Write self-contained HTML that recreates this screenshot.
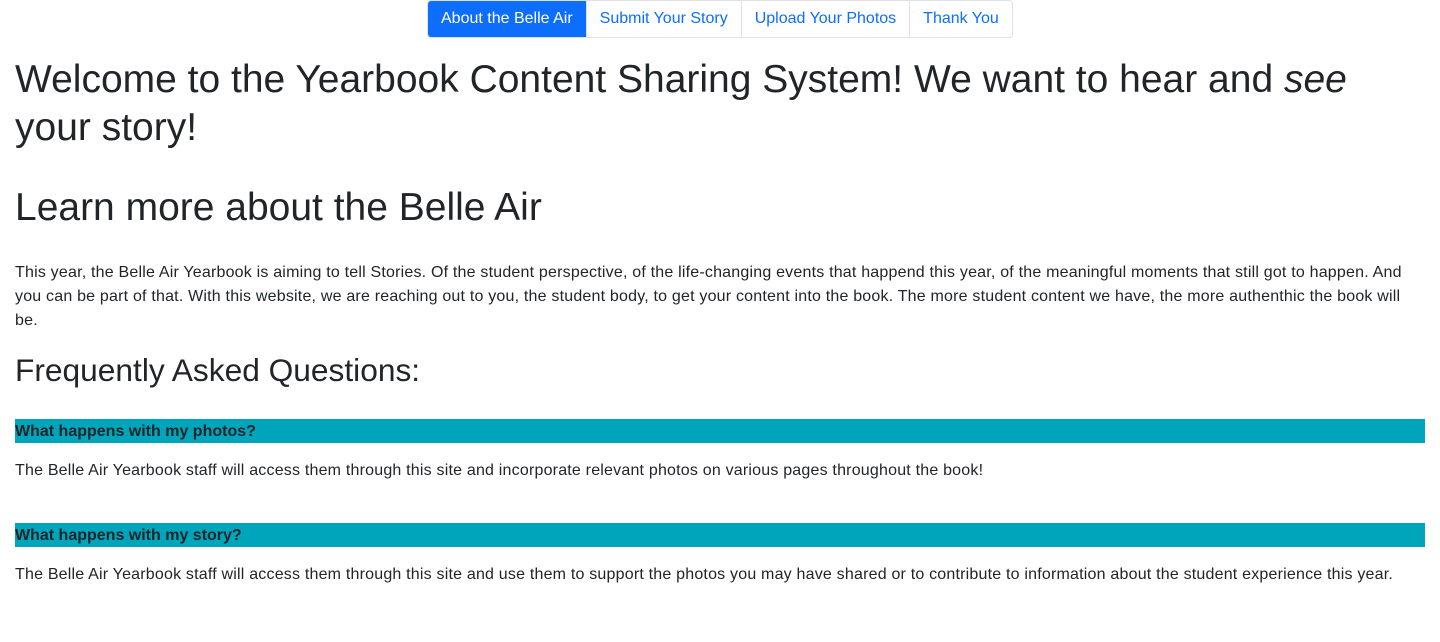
<!DOCTYPE html>
<html><head><meta charset="utf-8"><style>
*{box-sizing:border-box}
body{margin:0;font-family:"Liberation Sans",Arial,sans-serif;color:#212529;font-size:16px;line-height:24px;background:#fff}
.nav{position:absolute;top:0;left:427px;height:38px;display:flex;border:1px solid #dee2e6;border-radius:4px;overflow:hidden}
.nav a{display:block;padding:0 13px;line-height:36px;color:#0d6efd;text-decoration:none;border-left:1px solid #dee2e6;font-size:16px}
.nav a:first-child{background:#0d6efd;color:#fff;border-left:none}
.c{position:absolute;left:15px;width:1410px;font-size:16px;letter-spacing:0.2px}
h1{margin:0;font-size:39px;line-height:48px;font-weight:500;letter-spacing:0}
h2{margin:0;font-size:31.7px;line-height:38px;font-weight:500;letter-spacing:0}
p{margin:0}
.bar{background:#00a5bb;font-weight:bold;height:24px;line-height:25px;letter-spacing:0}
</style></head><body>
<div class="nav"><a>About the Belle Air</a><a>Submit Your Story</a><a>Upload Your Photos</a><a>Thank You</a></div>
<div class="c" style="top:56px"><h1>Welcome to the Yearbook Content Sharing System! We want to hear and <i>see</i> your story!</h1></div>
<div class="c" style="top:184px"><h1>Learn more about the Belle Air</h1></div>
<div class="c" style="top:261px"><p>This year, the Belle Air Yearbook is aiming to tell Stories. Of the student perspective, of the life-changing events that happend this year, of the meaningful moments that still got to happen. And you can be part of that. With this website, we are reaching out to you, the student body, to get your content into the book. The more student content we have, the more authenthic the book will be.</p></div>
<div class="c" style="top:351px"><h2>Frequently Asked Questions:</h2></div>
<div class="c bar" style="top:419px">What happens with my photos?</div>
<div class="c" style="top:459px">The Belle Air Yearbook staff will access them through this site and incorporate relevant photos on various pages throughout the book!</div>
<div class="c bar" style="top:523px">What happens with my story?</div>
<div class="c" style="top:563px">The Belle Air Yearbook staff will access them through this site and use them to support the photos you may have shared or to contribute to information about the student experience this year.</div>
</body></html>
